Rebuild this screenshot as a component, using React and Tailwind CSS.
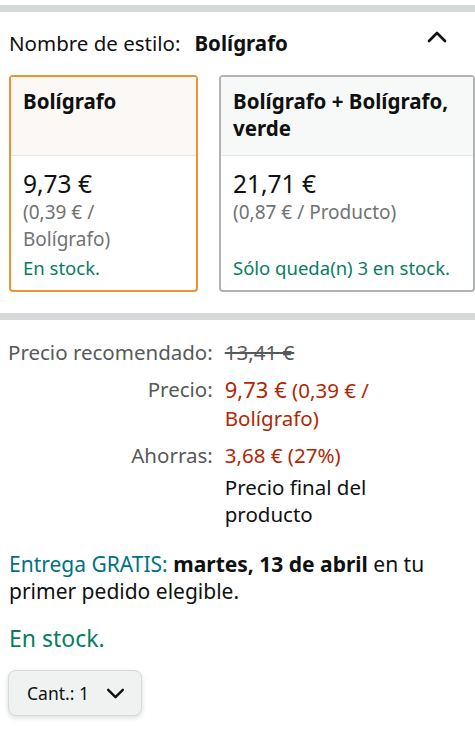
import React from "react";

const font = { fontFamily: '"Noto Sans", "Open Sans", Arial, sans-serif' };

function Chevron({ up = false, className = "" }) {
  return (
    <svg className={className} viewBox="0 0 20 12" fill="none" stroke="#0f1111" strokeWidth="2.6" strokeLinecap="round" strokeLinejoin="round">
      {up ? <polyline points="2,10 10,2 18,10" /> : <polyline points="2,2 10,10 18,2" />}
    </svg>
  );
}

function StyleCard({ title, price, unit, stock, selected, width }) {
  return (
    <div
      className={`flex shrink-0 flex-col rounded-[4px] border-2 ${selected ? "border-[#f0922e]" : "border-[#b0b2b4]"} h-[217px] ${width}`}
    >
      <div className={`h-[79px] border-b border-[#e7e7e7] px-[12px] pt-[11px] ${selected ? "bg-[#fcf8f6]" : "bg-[#f7f8f8]"}`}>
        <p className="text-[20.5px] font-bold leading-[27px] text-[#0f1111]">{title}</p>
      </div>
      <div className="flex flex-1 flex-col px-[12px] pt-[12px] pb-[9px]">
        <p className="text-[24.5px] leading-[31px] text-[#0f1111]">{price}</p>
        <p className="text-[19px] leading-[27px] text-[#6f7373]">{unit}</p>
        <p className="mt-auto text-[18.5px] leading-[27px] text-[#067d62]">{stock}</p>
      </div>
    </div>
  );
}

export default function App() {
  return (
    <div className="min-h-screen w-[475px] overflow-hidden bg-white text-[#0f1111]" style={font}>
      <div className="h-[5px] bg-white" />
      <div className="h-[7px] bg-[#d5d9d9]" />

      <section className="px-[9px] pt-[17px] pb-[21px]">
        <div className="flex items-center justify-between pr-[19px]">
          <p className="text-[20.5px] leading-[28px]">
            Nombre de estilo:<span className="ml-[14px] font-bold">Bolígrafo</span>
          </p>
          <Chevron up className="mb-[12px] h-[12px] w-[20px]" />
        </div>
        <div className="mt-[18px] flex gap-[21px]">
          <StyleCard
            selected
            width="w-[189px]"
            title="Bolígrafo"
            price="9,73 €"
            unit={<>(0,39 € /<br />Bolígrafo)</>}
            stock="En stock."
          />
          <StyleCard
            width="w-[256px]"
            title={<>Bolígrafo + Bolígrafo,<br />verde</>}
            price="21,71 €"
            unit="(0,87 € / Producto)"
            stock="Sólo queda(n) 3 en stock."
          />
        </div>
      </section>

      <div className="h-[7px] bg-[#d5d9d9]" />

      <section className="px-[8px] pt-[18px]">
        <div className="grid grid-cols-[max-content_1fr] gap-x-[12px] text-[20.5px] leading-[28px]">
          <span className="whitespace-nowrap text-right text-[#565959]">Precio recomendado:</span>
          <span className="text-[#565959] line-through">13,41 €</span>

          <span className="mt-[9px] whitespace-nowrap text-right text-[#565959]">Precio:</span>
          <span className="mt-[9px] text-[#b12704]">
            <span className="text-[22px]">9,73 €</span> (0,39 € /<br />Bolígrafo)
          </span>

          <span className="mt-[9px] whitespace-nowrap text-right text-[#565959]">Ahorras:</span>
          <div className="mt-[9px]">
            <p className="text-[#b12704]">3,68 € (27%)</p>
            <p className="mt-[5px] leading-[27px] text-[#0f1111]">
              Precio final del<br />producto
            </p>
          </div>
        </div>

        <p className="mt-[23px] pl-[1px] text-[21px] leading-[27px]">
          <span className="text-[#007185]">Entrega GRATIS:</span> <span className="font-bold">martes, 13 de abril</span> en tu primer pedido elegible.
        </p>

        <p className="mt-[18px] pl-[1px] text-[23px] leading-[30px] text-[#067d62]">En stock.</p>

        <button className="mt-[17px] flex h-[46px] w-[134px] items-center rounded-[8px] border border-[#d5d9d9] bg-[#f0f2f2] pl-[18px] shadow-[0_2px_5px_rgba(15,17,17,0.15)]">
          <span className="text-[17.5px] text-[#0f1111]">Cant.: 1</span>
          <Chevron className="ml-[17px] h-[11px] w-[19px]" />
        </button>
      </section>
    </div>
  );
}
